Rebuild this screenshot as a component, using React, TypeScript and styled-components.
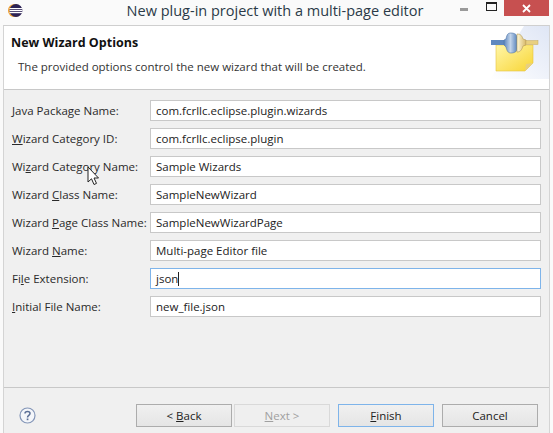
import React from "react";
import styled, { createGlobalStyle } from "styled-components";

const GlobalStyle = createGlobalStyle`
  html, body {
    margin: 0;
    padding: 0;
    background: #ffffff;
  }
  body {
    width: 553px;
    height: 433px;
    overflow: hidden;
    font-family: "Open Sans", "Liberation Sans", sans-serif;
    font-size: 11.5px;
    color: #222;
  }
`;

const Window = styled.div`
  position: relative;
  width: 553px;
  height: 433px;
  display: flex;
  flex-direction: column;
  background: #fafafa;
  overflow: hidden;
`;

const TitleBar = styled.div`
  height: 25px;
  display: flex;
  align-items: flex-start;
  padding-left: 7px;
  box-sizing: border-box;
`;

const Logo = styled.svg`
  margin-top: 3px;
`;

const Title = styled.div`
  flex: 1;
  text-align: center;
  font-size: 14.5px;
  line-height: 22px;
  color: #2b3a48;
  padding-left: 82px;
  white-space: nowrap;
`;

const Controls = styled.div`
  display: flex;
  align-items: flex-start;
  justify-content: flex-end;
  width: 104px;
  margin-right: 4px;
`;

const MinimizeBtn = styled.div`
  width: 8px;
  height: 3px;
  background: #9a9a9a;
  margin: 8px 18px 0 0;
`;

const MaximizeBtn = styled.div`
  width: 9px;
  height: 6px;
  border: 1px solid #222;
  border-top-width: 2px;
  margin: 2px 0 0 0;
`;

const CloseBtn = styled.div`
  width: 45px;
  height: 16px;
  margin-left: 7px;
  background: #c75050;
  color: #fff;
  display: flex;
  align-items: center;
  justify-content: center;
`;

const Panel = styled.div`
  flex: 1;
  display: flex;
  flex-direction: column;
  margin: 0 3px;
  border-top: 1px solid #cfcfcf;
  border-left: 1px solid #d4d4d4;
  border-right: 1px solid #d4d4d4;
  background: #f0f0f0;
  min-height: 0;
`;

const Banner = styled.div`
  height: 64px;
  box-sizing: border-box;
  background: #fff;
  border-bottom: 1px solid #c8c8c8;
  position: relative;
  padding: 9px 0 0 7px;
`;

const BannerTitle = styled.div`
  font-weight: 700;
  font-size: 12.5px;
  line-height: 16px;
  color: #111;
`;

const BannerText = styled.div`
  margin: 8px 0 0 7px;
  line-height: 16px;
  color: #333;
`;

const BannerArt = styled.svg`
  position: absolute;
  right: 0;
  top: 0;
`;

const Form = styled.div`
  flex: 1;
  padding: 10px 8px 0 8px;
  display: flex;
  flex-direction: column;
  gap: 7px;
`;

const Row = styled.div`
  display: flex;
  align-items: center;
  height: 21px;
`;

const Label = styled.div`
  width: 138px;
  white-space: nowrap;
  color: #2a2a2a;
`;

const Field = styled.div<{ $focused?: boolean }>`
  flex: 1;
  height: 21px;
  box-sizing: border-box;
  background: #fff;
  border: 1px solid ${(p) => (p.$focused ? "#7eb4ea" : "#c8c8c8")};
  padding-left: 5px;
  line-height: 19px;
  color: #222;
  white-space: nowrap;
`;

const Caret = styled.span`
  display: inline-block;
  width: 1px;
  height: 14px;
  background: #222;
  vertical-align: -3px;
`;

const Footer = styled.div`
  height: 46px;
  box-sizing: border-box;
  border-top: 1px solid #c8c8c8;
  display: flex;
  align-items: flex-start;
  padding: 16px 0 0 15px;
`;

const HelpIcon = styled.svg`
  margin-top: 3px;
`;

const ButtonRow = styled.div`
  display: flex;
  margin-left: 100px;
`;

const Btn = styled.div<{ $disabled?: boolean; $primary?: boolean; $gap?: number }>`
  width: 96px;
  height: 23px;
  box-sizing: border-box;
  margin-left: ${(p) => p.$gap ?? 0}px;
  display: flex;
  align-items: center;
  justify-content: center;
  background: ${(p) => (p.$disabled ? "#efefef" : "linear-gradient(#f0f0f0, #e5e5e5)")};
  border: 1px solid ${(p) => (p.$disabled ? "#d9d9d9" : p.$primary ? "#7eb4ea" : "#acacac")};
  color: ${(p) => (p.$disabled ? "#a0a0a0" : "#222")};
`;

const Pointer = styled.svg`
  position: absolute;
  left: 87px;
  top: 166px;
`;

const fields: { label: React.ReactNode; value: string; focused?: boolean }[] = [
  { label: <>Java Package Name:</>, value: "com.fcrllc.eclipse.plugin.wizards" },
  { label: <><u>W</u>izard Category ID:</>, value: "com.fcrllc.eclipse.plugin" },
  { label: <>Wi<u>z</u>ard Category Name:</>, value: "Sample Wizards" },
  { label: <>Wizard <u>C</u>lass Name:</>, value: "SampleNewWizard" },
  { label: <>Wizard <u>P</u>age Class Name:</>, value: "SampleNewWizardPage" },
  { label: <>Wizard <u>N</u>ame:</>, value: "Multi-page Editor file" },
  { label: <>Fi<u>l</u>e Extension:</>, value: "json", focused: true },
  { label: <><u>I</u>nitial File Name:</>, value: "new_file.json" },
];

const EclipseLogo = () => (
  <Logo width="16" height="15" viewBox="0 0 16 15">
    <circle cx="7.6" cy="7.5" r="6.6" fill="#f0a030" />
    <circle cx="9" cy="7.5" r="6.5" fill="#2c2255" />
    <rect x="2.5" y="5" width="13" height="1.2" fill="#fff" />
    <rect x="2.5" y="7" width="13" height="1.2" fill="#fff" />
    <rect x="2.5" y="9" width="13" height="1.2" fill="#fff" />
  </Logo>
);

const WizardArt = () => (
  <BannerArt width="63" height="53" viewBox="0 0 63 53">
    <defs>
      <linearGradient id="wash" x1="0" y1="1" x2="1" y2="0">
        <stop offset="0" stopColor="#ffffff" />
        <stop offset="1" stopColor="#dfe6f5" />
      </linearGradient>
      <linearGradient id="note" x1="0" y1="0" x2="1" y2="1">
        <stop offset="0" stopColor="#fff6a8" />
        <stop offset="1" stopColor="#f8d534" />
      </linearGradient>
      <linearGradient id="plugBlue" x1="0" y1="0" x2="1" y2="0">
        <stop offset="0" stopColor="#5c86bd" />
        <stop offset="0.5" stopColor="#c2d4ea" />
        <stop offset="1" stopColor="#5c86bd" />
      </linearGradient>
      <linearGradient id="plugCream" x1="0" y1="0" x2="1" y2="0">
        <stop offset="0" stopColor="#fff8d8" />
        <stop offset="1" stopColor="#d7b868" />
      </linearGradient>
    </defs>
    <path d="M63 0V53H4L38 0Z" fill="url(#wash)" />
    <path d="M10 19H47V37L39 45H10Z" fill="url(#note)" stroke="#e6c542" strokeWidth="0.6" />
    <path d="M39 45L40 38L47 37Z" fill="#e8cf80" />
    <rect x="5" y="14" width="14" height="5" fill="#5f88bf" />
    <path d="M18 14L20 13C21 8 22 7 25 7C29 7 31 9 31 11V23C31 25 29 27 25 27C22 27 21 25 20 21L18 19Z" fill="url(#plugBlue)" stroke="#4f76aa" strokeWidth="0.6" />
    <path d="M31 8C35 8 36 10 37 13L40 14V19L37 20C36 23 35 26 31 26Z" fill="url(#plugCream)" stroke="#b59a55" strokeWidth="0.6" />
    <rect x="40" y="14.5" width="12" height="4" fill="#e8cf80" stroke="#c3a862" strokeWidth="0.5" />
  </BannerArt>
);

const App = () => {
  return (
    <Window>
      <GlobalStyle />
      <TitleBar>
        <EclipseLogo />
        <Title>New plug-in project with a multi-page editor</Title>
        <Controls>
          <MinimizeBtn />
          <MaximizeBtn />
          <CloseBtn>
            <svg width="9" height="9" viewBox="0 0 9 9">
              <path d="M1 1L8 8M8 1L1 8" stroke="#fff" strokeWidth="1.8" />
            </svg>
          </CloseBtn>
        </Controls>
      </TitleBar>
      <Panel>
        <Banner>
          <BannerTitle>New Wizard Options</BannerTitle>
          <BannerText>The provided options control the new wizard that will be created.</BannerText>
          <WizardArt />
        </Banner>
        <Form>
          {fields.map((f) => (
            <Row key={f.value}>
              <Label>{f.label}</Label>
              <Field $focused={f.focused}>
                {f.value}
                {f.focused && <Caret />}
              </Field>
            </Row>
          ))}
        </Form>
        <Footer>
          <HelpIcon width="17" height="17" viewBox="0 0 17 17">
            <circle cx="8.5" cy="8.5" r="7.5" fill="#f4f6fa" stroke="#8496b8" strokeWidth="1.2" />
            <path d="M6 6.6C6 3.8 11 3.8 11 6.6C11 8.4 8.5 8.4 8.5 10.4" fill="none" stroke="#5b6f96" strokeWidth="1.5" />
            <rect x="7.7" y="11.5" width="1.7" height="1.7" fill="#5b6f96" />
          </HelpIcon>
          <ButtonRow>
            <Btn>&lt;&nbsp;<u>B</u>ack</Btn>
            <Btn $disabled $gap={2}><u>N</u>ext &gt;</Btn>
            <Btn $primary $gap={8}><u>F</u>inish</Btn>
            <Btn $gap={8}>Cancel</Btn>
          </ButtonRow>
        </Footer>
      </Panel>
      <Pointer width="14" height="20" viewBox="0 0 14 20">
        <path d="M1 1V16L4.5 12.8L7 18.5L9.5 17.4L7 12H11.5Z" fill="#fff" stroke="#222" strokeWidth="1" />
      </Pointer>
    </Window>
  );
};

export default App;
